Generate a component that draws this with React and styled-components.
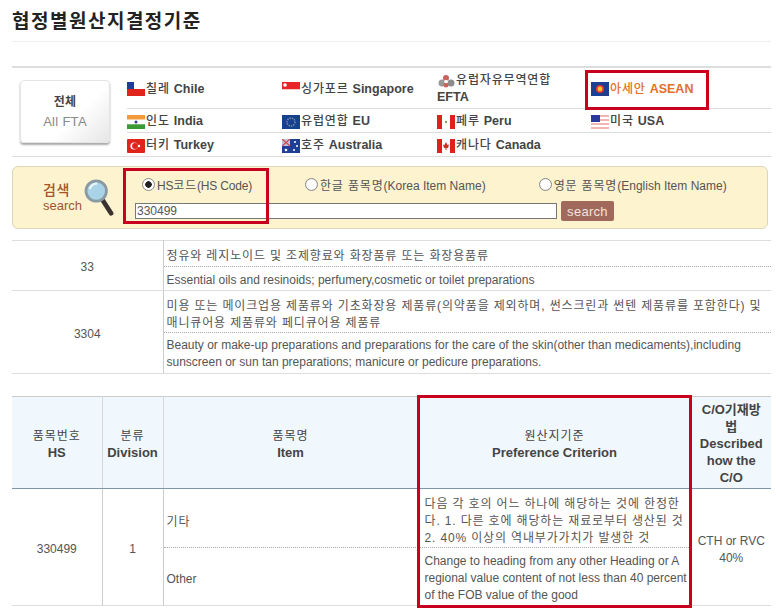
import React from "react";
import styled, { createGlobalStyle } from "styled-components";

const GlobalStyle = createGlobalStyle`
  html, body {
    margin: 0;
    padding: 0;
    background: #fff;
    overflow: hidden;
  }
  body {
    font-family: "Liberation Sans", "Noto Sans CJK KR", sans-serif;
    font-size: 12px;
    color: #555;
  }
`;

const Page = styled.div`
  position: relative;
  width: 776px;
  height: 611px;
  padding: 0 5px 0 12px;
  box-sizing: border-box;
  overflow: hidden;
`;

const Ko = styled.span`
  letter-spacing: 0.85px;
`;

const Title = styled.h1`
  margin: 0;
  height: 42px;
  box-sizing: border-box;
  padding-top: 6px;
  border-bottom: 1px solid #eee;
  font-size: 19px;
  line-height: 28px;
  font-weight: 700;
  letter-spacing: 1.5px;
  color: #222;
  font-family: "Noto Sans CJK KR", sans-serif;
`;

const FtaSection = styled.section`
  display: flex;
  margin-top: 24px;
  height: 91px;
  box-sizing: border-box;
  border-top: 2px solid #ddd;
  border-bottom: 1px solid #ddd;
`;

const AllButton = styled.div`
  flex: none;
  display: flex;
  flex-direction: column;
  align-items: center;
  justify-content: center;
  gap: 2px;
  width: 90px;
  height: 63px;
  margin: 12px 17px 0 8px;
  box-sizing: border-box;
  border: 1px solid #e4e4e4;
  border-radius: 4px;
  background: linear-gradient(135deg, #fff 60%, #e6e6e6);
  box-shadow: 0 2px 2px #aaa;
  font-size: 13px;
  letter-spacing: 0.3px;
  line-height: 17px;
  color: #888;

  strong {
    color: #444;
    font-size: 12px;
  }
`;

const FtaGrid = styled.div`
  flex: 1;
  display: grid;
  grid-template-columns: 155px 155px 154px 1fr;
  grid-template-rows: 41px 24px 23px;
`;

const FtaCell = styled.div`
  display: flex;
  flex-wrap: wrap;
  align-items: center;
  align-content: center;
  padding: 2px 16px 0 0;
  border-bottom: ${({ $last }) => ($last ? "none" : "1px solid #ddd")};
  font-size: 12.5px;
  line-height: 17px;
  font-weight: 700;
  color: ${({ $active }) => ($active ? "#e2702c" : "#444")};
`;

const FtaKo = styled(Ko)`
  font-weight: 500;
  font-size: 12px;
  margin-right: 4px;
`;

const FlagSvg = styled.svg`
  flex: none;
  width: 18px;
  height: 14px;
  margin-right: 1px;
`;

const SearchBox = styled.form`
  display: flex;
  height: 63px;
  width: 756px;
  margin-top: 9px;
  box-sizing: border-box;
  background: #fdf3cf;
  border: 1px solid #ddd6b8;
  border-radius: 6px;
`;

const SearchLabel = styled.div`
  flex: none;
  display: flex;
  align-items: center;
  width: 122px;
  padding-left: 30px;
  box-sizing: border-box;
  gap: 2px;
`;

const SearchText = styled.div`
  font-size: 13px;
  line-height: 15px;
  text-align: left;
  color: #a0552e;

  strong {
    display: block;
    font-size: 14px;
    font-weight: 500;
    letter-spacing: 0.5px;
  }
`;

const SearchFields = styled.div`
  flex: 1;
  display: flex;
  flex-direction: column;
  padding-top: 9px;
  gap: 10px;
`;

const RadioRow = styled.div`
  display: flex;
  padding-left: 7px;
  gap: 53px;
`;

const RadioLabel = styled.label`
  display: flex;
  align-items: center;
  gap: 2px;
  height: 17px;
  color: #555;
  white-space: nowrap;
  letter-spacing: ${({ $tight }) => ($tight ? "-0.2px" : "0")};
`;

const RadioInput = styled.input`
  appearance: none;
  width: 13px;
  height: 13px;
  margin: 0;
  border-radius: 50%;
  border: 1px solid #8a8a8a;
  background: radial-gradient(circle, #fff 50%, #d8d8d8);
  box-sizing: border-box;

  &:checked {
    background: radial-gradient(circle, #222 0 3px, #fff 3.5px);
  }
`;

const InputRow = styled.div`
  display: flex;
  align-items: center;
  gap: 4px;
  margin-top: -2px;
`;

const CodeInput = styled.input`
  width: 422px;
  height: 16px;
  margin: 0;
  padding: 0 1px;
  box-sizing: border-box;
  border: 1px solid #777;
  background: #fff;
  font: inherit;
  color: #555;
  outline: none;
`;

const SearchButton = styled.button`
  width: 53px;
  height: 20px;
  padding: 0;
  border: none;
  border-radius: 2px;
  background: #a0695c;
  color: #f2e4dc;
  font: inherit;
  font-size: 13px;
  letter-spacing: 0.3px;
`;

const HeadingTable = styled.table`
  width: 759px;
  margin-top: 11px;
  border-collapse: collapse;
  table-layout: fixed;
  border-top: 1px solid #ddd;

  td {
    line-height: 17px;
    color: #555;
  }
`;

const CodeCell = styled.td`
  padding: 4px 3px 0;
  text-align: center;
  border-right: 1px solid #ccc;
  border-bottom: 1px solid #ddd;
`;

const TextCell = styled.td`
  height: ${({ $h }) => $h}px;
  padding: ${({ $top }) => $top || 0}px 3px 0;
  box-sizing: border-box;
  border-bottom: ${({ $dotted }) => ($dotted ? "1px dotted #aaa" : "1px solid #ddd")};
`;

const ItemTable = styled.table`
  width: 759px;
  margin-top: 22px;
  border-collapse: collapse;
  table-layout: fixed;
  border-top: 1px solid #ccc;
  border-bottom: 1px solid #ddd;
`;

const HeadCell = styled.th`
  height: 92px;
  box-sizing: border-box;
  padding: ${({ $top }) => $top ?? 4}px ${({ $pad }) => $pad || 0}px 0;
  background: #f1f8fd;
  border-left: ${({ $first }) => ($first ? "none" : "1px solid #d5d9dc")};
  border-bottom: 1px solid #7f96ab;
  font-size: 13px;
  line-height: 17px;
  font-weight: 700;
  color: #444;
  text-align: center;
  vertical-align: middle;

  span {
    display: block;
    line-height: 15px;
    font-size: 12px;
    font-weight: 400;
    letter-spacing: 1px;
  }
`;

const BodyCell = styled.td`
  height: ${({ $h }) => ($h ? `${$h}px` : "auto")};
  box-sizing: border-box;
  padding: ${({ $top }) => $top || 0}px ${({ $padRight }) => $padRight || 0}px 0 ${({ $pad }) => $pad || 0}px;
  border-left: ${({ $first }) => ($first ? "none" : "1px solid #ccc")};
  border-bottom: ${({ $dotted }) => ($dotted ? "1px dotted #aaa" : "none")};
  text-align: ${({ $center }) => ($center ? "center" : "left")};
  line-height: 17px;
  color: #555;
`;

const Highlight = styled.div`
  position: absolute;
  left: ${({ $x }) => $x}px;
  top: ${({ $y }) => $y}px;
  width: ${({ $w }) => $w}px;
  height: ${({ $h }) => $h}px;
  box-sizing: border-box;
  border: 3px solid #c8001e;
  pointer-events: none;
`;

const Flag = ({ name }) => {
  const body = {
    chile: (
      <>
        <rect width="18" height="7" fill="#fff" />
        <rect y="7" width="18" height="7" fill="#e0241c" />
        <rect width="7" height="7" fill="#1c3f94" />
      </>
    ),
    singapore: (
      <>
        <rect y="0" width="18" height="7" fill="#e8262a" />
        <rect y="7" width="18" height="1" fill="#f6c9c9" />
        <circle cx="3" cy="3" r="1.8" fill="#fff" />
      </>
    ),
    efta: (
      <>
        <circle cx="5" cy="9" r="3.5" fill="#999" />
        <circle cx="9" cy="4" r="3" fill="#c9625c" />
        <circle cx="14" cy="9" r="3.5" fill="#8c8c8c" />
        <circle cx="9" cy="11" r="2.5" fill="#c9625c" />
        <circle cx="9" cy="7.5" r="1.8" fill="#fff" />
      </>
    ),
    asean: (
      <>
        <rect width="18" height="14" fill="#1c3f94" />
        <circle cx="9" cy="7" r="4" fill="#e8322a" />
        <circle cx="9" cy="7" r="2.4" fill="#f2c230" />
      </>
    ),
    india: (
      <>
        <rect width="18" height="4.7" fill="#f39a3a" />
        <rect y="4.7" width="18" height="4.6" fill="#fff" />
        <rect y="9.3" width="18" height="4.7" fill="#3c9a34" />
        <circle cx="9" cy="7" r="1.5" fill="#33408f" />
      </>
    ),
    eu: (
      <>
        <rect width="18" height="14" fill="#16418f" />
        <circle cx="9" cy="7" r="4" fill="none" stroke="#7f93a8" strokeWidth="1.4" strokeDasharray="1.4 1" />
      </>
    ),
    peru: (
      <>
        <rect width="18" height="14" fill="#fff" />
        <rect width="5" height="14" fill="#e0201e" />
        <rect x="13" width="5" height="14" fill="#e0201e" />
        <circle cx="9" cy="7" r="1.2" fill="#7ba86c" />
      </>
    ),
    usa: (
      <>
        <rect width="18" height="14" fill="#f4b5b2" />
        <rect y="2" width="18" height="2" fill="#fff" />
        <rect y="6" width="18" height="2" fill="#fff" />
        <rect y="10" width="18" height="2" fill="#fff" />
        <rect width="9" height="7" fill="#2a3a9c" />
      </>
    ),
    turkey: (
      <>
        <rect width="18" height="14" rx="1" fill="#e0241c" />
        <circle cx="7" cy="7" r="3.6" fill="#fff" />
        <circle cx="8" cy="7" r="2.9" fill="#e0241c" />
        <circle cx="12" cy="7" r="1.2" fill="#fff" />
      </>
    ),
    australia: (
      <>
        <rect width="18" height="14" fill="#1f3f96" />
        <rect width="8" height="7" fill="#b9c3dd" />
        <path d="M0 0 8 7M8 0 0 7" stroke="#d9454a" strokeWidth="1.2" />
        <circle cx="4" cy="11" r="1.3" fill="#fff" />
        <circle cx="13" cy="3" r="1" fill="#fff" />
        <circle cx="15" cy="7" r="1" fill="#fff" />
        <circle cx="12" cy="11" r="1" fill="#fff" />
      </>
    ),
    canada: (
      <>
        <rect width="18" height="14" fill="#fff" />
        <rect width="5" height="14" fill="#e0201e" />
        <rect x="13" width="5" height="14" fill="#e0201e" />
        <path d="M9 3 10.5 6 12 5.5 11 9 9.5 9V11H8.500V9L7 9 6 5.500 7.500 6Z" fill="#c8302a" />
      </>
    ),
  };
  return <FlagSvg viewBox="0 0 18 14">{body[name]}</FlagSvg>;
};

const Magnifier = () => (
  <svg width="30" height="39" viewBox="0 0 32 42">
    <path d="M20 24 29 38" stroke="#3a3230" strokeWidth="5" strokeLinecap="round" />
    <circle cx="13" cy="14" r="11" fill="#a9d3e6" stroke="#8a9aa2" strokeWidth="3" />
    <path d="M6 12a8 8 0 0 1 8-6" fill="none" stroke="#e8f6fb" strokeWidth="2.500" />
  </svg>
);

const ftaItems = [
  { flag: "chile", ko: "칠레", en: "Chile" },
  { flag: "singapore", ko: "싱가포르", en: "Singapore" },
  { flag: "efta", ko: "유럽자유무역연합", en: "EFTA" },
  { flag: "asean", ko: "아세안", en: "ASEAN", active: true },
  { flag: "india", ko: "인도", en: "India" },
  { flag: "eu", ko: "유럽연합", en: "EU" },
  { flag: "peru", ko: "페루", en: "Peru" },
  { flag: "usa", ko: "미국", en: "USA" },
  { flag: "turkey", ko: "터키", en: "Turkey", last: true },
  { flag: "australia", ko: "호주", en: "Australia", last: true },
  { flag: "canada", ko: "캐나다", en: "Canada", last: true },
  { last: true },
];

const App = () => (
  <>
    <GlobalStyle />
    <Page>
      <Title>협정별원산지결정기준</Title>

      <FtaSection>
        <AllButton>
          <strong>전체</strong>
          All FTA
        </AllButton>
        <FtaGrid>
          {ftaItems.map((item, i) => (
            <FtaCell key={i} $active={item.active} $last={item.last}>
              {item.flag && <Flag name={item.flag} />}
              {item.ko && <FtaKo>{item.ko}</FtaKo>}
              {item.en}
            </FtaCell>
          ))}
        </FtaGrid>
      </FtaSection>

      <SearchBox onSubmit={(e) => e.preventDefault()}>
        <SearchLabel>
          <SearchText>
            <strong>검색</strong>
            search
          </SearchText>
          <Magnifier />
        </SearchLabel>
        <SearchFields>
          <RadioRow>
            <RadioLabel $tight>
              <RadioInput type="radio" name="kind" defaultChecked />
              <span>HS<Ko>코드</Ko>(HS Code)</span>
            </RadioLabel>
            <RadioLabel>
              <RadioInput type="radio" name="kind" />
              <span><Ko>한글 품목명</Ko>(Korea Item Name)</span>
            </RadioLabel>
            <RadioLabel>
              <RadioInput type="radio" name="kind" />
              <span><Ko>영문 품목명</Ko>(English Item Name)</span>
            </RadioLabel>
          </RadioRow>
          <InputRow>
            <CodeInput defaultValue="330499" readOnly />
            <SearchButton type="button">search</SearchButton>
          </InputRow>
        </SearchFields>
      </SearchBox>

      <HeadingTable>
        <colgroup>
          <col width="151" />
          <col width="608" />
        </colgroup>
        <tbody>
          <tr>
            <CodeCell rowSpan={2}>33</CodeCell>
            <TextCell $h={26} $top={6} $dotted><Ko>정유와 레지노이드 및 조제향료와 화장품류 또는 화장용품류</Ko></TextCell>
          </tr>
          <tr>
            <TextCell $h={24} $top={4}>Essential oils and resinoids; perfumery,cosmetic or toilet preparations</TextCell>
          </tr>
          <tr>
            <CodeCell rowSpan={2}>3304</CodeCell>
            <TextCell $h={42} $top={6} $dotted>
              <Ko>미용 또는 메이크업용 제품류와 기초화장용 제품류(의약품을 제외하며, 썬스크린과 썬텐 제품류를 포함한다) 및 매니큐어용 제품류와 페디큐어용 제품류</Ko>
            </TextCell>
          </tr>
          <tr>
            <TextCell $h={41} $top={2}>
              Beauty or make-up preparations and preparations for the care of the skin(other than medicaments),including sunscreen or sun tan preparations; manicure or pedicure preparations.
            </TextCell>
          </tr>
        </tbody>
      </HeadingTable>

      <ItemTable>
        <colgroup>
          <col width="90" />
          <col width="61" />
          <col width="255" />
          <col width="273" />
          <col width="80" />
        </colgroup>
        <thead>
          <tr>
            <HeadCell $first><span>품목번호</span>HS</HeadCell>
            <HeadCell><span>분류</span>Division</HeadCell>
            <HeadCell><span>품목명</span>Item</HeadCell>
            <HeadCell><span>원산지기준</span>Preference Criterion</HeadCell>
            <HeadCell $pad={5} $top={2}>C/O기재방법 Described how the C/O</HeadCell>
          </tr>
        </thead>
        <tbody>
          <tr>
            <BodyCell rowSpan={2} $center $first $top={4}>330499</BodyCell>
            <BodyCell rowSpan={2} $center $top={4}>1</BodyCell>
            <BodyCell $h={59} $pad={3} $top={8} $dotted><Ko>기타</Ko></BodyCell>
            <BodyCell $pad={6} $padRight={2} $top={6} $dotted><Ko>다음 각 호의 어느 하나에 해당하는 것에 한정한다. 1. 다른 호에 해당하는 재료로부터 생산된 것 2. 40% 이상의 역내부가가치가 발생한 것</Ko></BodyCell>
            <BodyCell rowSpan={2} $center $top={6}>CTH or RVC 40%</BodyCell>
          </tr>
          <tr>
            <BodyCell $h={58} $pad={3} $top={6}>Other</BodyCell>
            <BodyCell $pad={6} $padRight={2} $top={4}>Change to heading from any other Heading or A regional value content of not less than 40 percent of the FOB value of the good</BodyCell>
          </tr>
        </tbody>
      </ItemTable>

      <Highlight $x={585} $y={70} $w={124} $h={40} />
      <Highlight $x={123} $y={168} $w={146} $h={56} />
      <Highlight $x={417} $y={395} $w={275} $h={213} />
    </Page>
  </>
);

export default App;
